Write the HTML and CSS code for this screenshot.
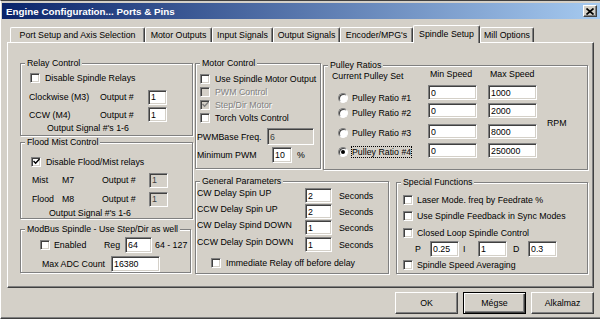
FILE: index.html
```html
<!DOCTYPE html>
<html lang="hu">
<head>
    <meta charset="UTF-8">
    <title>Engine Configuration... Ports &amp; Pins</title>
    <link rel="stylesheet" href="styles.css">
</head>
<body>
<div class="window">
    <!-- Barre de titre -->
    <div class="titlebar">
        <span class="title">Engine Configuration... Ports &amp; Pins</span>
        <span class="close-btn">
            <svg width="8" height="7" viewBox="0 0 8 7"><path d="M0.5 0.5 L7.5 6.5 M7.5 0.5 L0.5 6.5" stroke="#000" stroke-width="1.7"/></svg>
        </span>
    </div>

    <div class="client">
        <!-- Onglets -->
        <div class="tabs">
            <div class="tab tab-port">Port Setup and Axis Selection</div>
            <div class="tab tab-motor">Motor Outputs</div>
            <div class="tab tab-input">Input Signals</div>
            <div class="tab tab-output">Output Signals</div>
            <div class="tab tab-encoder">Encoder/MPG's</div>
            <div class="tab tab-spindle selected">Spindle Setup</div>
            <div class="tab tab-mill">Mill Options</div>
        </div>

        <div class="panel">
            <!-- Colonne gauche -->
            <div class="col-left">
                <div class="group relay">
                    <span class="group-title">Relay Control</span>
                    <div class="check-row"><span class="check"></span>Disable Spindle Relays</div>
                    <div class="out-row">
                        <span>Clockwise (M3)</span><span>Output #</span><input class="field" value="1">
                    </div>
                    <div class="out-row second">
                        <span>CCW (M4)</span><span>Output #</span><input class="field" value="1">
                    </div>
                    <div class="signal-note">Output Signal #'s 1-6</div>
                </div>

                <div class="group flood">
                    <span class="group-title">Flood Mist Control</span>
                    <div class="check-row">
                        <span class="check"><svg width="7" height="7" viewBox="0 0 7 7"><path d="M0.5 3 L2.6 5.2 L6.5 1" fill="none" stroke="#000" stroke-width="1.5"/></svg></span>
                        Disable Flood/Mist relays
                    </div>
                    <div class="mist-row">
                        <span>Mist</span><span>M7</span><span>Output #</span><input class="field" value="1" disabled>
                    </div>
                    <div class="mist-row second">
                        <span>Flood</span><span>M8</span><span>Output #</span><input class="field" value="1" disabled>
                    </div>
                    <div class="signal-note">Output Signal #'s 1-6</div>
                </div>

                <div class="group modbus">
                    <span class="group-title">ModBus Spindle - Use Step/Dir as well</span>
                    <div class="modbus-row">
                        <span class="check"></span>
                        <span class="enabled-label">Enabled</span>
                        <span class="reg-label">Reg</span>
                        <input class="field reg-field" value="64">
                        <span class="reg-range">64 - 127</span>
                    </div>
                    <div class="adc-row">
                        <span class="adc-label">Max ADC Count</span>
                        <input class="field adc-field" value="16380">
                    </div>
                </div>
            </div>

            <!-- Zone droite -->
            <div class="col-right">
                <div class="row-top">
                    <div class="group motor">
                        <span class="group-title">Motor Control</span>
                        <div class="check-row"><span class="check"></span>Use Spindle Motor Output</div>
                        <div class="check-row disabled"><span class="check"></span>PWM Control</div>
                        <div class="check-row disabled">
                            <span class="check"><svg width="7" height="7" viewBox="0 0 7 7"><path d="M0.5 3 L2.6 5.2 L6.5 1" fill="none" stroke="#808080" stroke-width="1.5"/></svg></span>
                            Step/Dir Motor
                        </div>
                        <div class="check-row"><span class="check"></span>Torch Volts Control</div>
                        <div class="pwm-row">
                            <span class="pwm-label">PWMBase Freq.</span>
                            <input class="field pwm-field" value="6" disabled>
                        </div>
                        <div class="minpwm-row">
                            <span class="minpwm-label">Minimum PWM</span>
                            <input class="field minpwm-field" value="10">
                            <span class="percent">%</span>
                        </div>
                    </div>

                    <div class="group pulley">
                        <span class="group-title">Pulley Ratios</span>
                        <div class="pulley-head">
                            <span class="head-set">Current Pulley Set</span>
                            <span class="head-min">Min Speed</span>
                            <span>Max Speed</span>
                        </div>
                        <div class="pulley-main">
                            <div class="radios">
                                <div class="radio-row"><span class="radio"></span>Pulley Ratio #1</div>
                                <div class="radio-row"><span class="radio"></span>Pulley Ratio #2</div>
                                <div class="radio-row"><span class="radio"></span>Pulley Ratio #3</div>
                                <div class="radio-row"><span class="radio on"></span><span class="focus">Pulley Ratio #4</span></div>
                            </div>
                            <div class="speeds min-col">
                                <input class="field speed-field" value="0">
                                <input class="field speed-field" value="0">
                                <input class="field speed-field" value="0">
                                <input class="field speed-field" value="0">
                            </div>
                            <div class="speeds max-col">
                                <input class="field speed-field" value="1000">
                                <input class="field speed-field" value="2000">
                                <input class="field speed-field" value="8000">
                                <input class="field speed-field" value="250000">
                            </div>
                            <span class="rpm">RPM</span>
                        </div>
                    </div>
                </div>

                <div class="row-bottom">
                    <div class="group general">
                        <span class="group-title">General Parameters</span>
                        <div class="delay-row"><span class="delay-label">CW Delay Spin UP</span><input class="field delay-field" value="2"><span class="seconds">Seconds</span></div>
                        <div class="delay-row"><span class="delay-label">CCW Delay Spin UP</span><input class="field delay-field" value="2"><span class="seconds">Seconds</span></div>
                        <div class="delay-row"><span class="delay-label">CW Delay Spind DOWN</span><input class="field delay-field" value="1"><span class="seconds">Seconds</span></div>
                        <div class="delay-row last"><span class="delay-label">CCW Delay Spin DOWN</span><input class="field delay-field" value="1"><span class="seconds">Seconds</span></div>
                        <div class="check-row"><span class="check"></span>Immediate Relay off before delay</div>
                    </div>

                    <div class="group special">
                        <span class="group-title">Special Functions</span>
                        <div class="check-row"><span class="check"></span>Laser Mode. freq by Feedrate %</div>
                        <div class="check-row"><span class="check"></span>Use Spindle Feedback in Sync Modes</div>
                        <div class="check-row"><span class="check"></span>Closed Loop Spindle Control</div>
                        <div class="pid-row">
                            <span class="pid-label">P</span><input class="field pid-field" value="0.25">
                            <span class="pid-label">I</span><input class="field pid-field" value="1">
                            <span class="pid-label">D</span><input class="field pid-field" value="0.3">
                        </div>
                        <div class="check-row"><span class="check"></span>Spindle Speed Averaging</div>
                    </div>
                </div>
            </div>
        </div>

        <!-- Boutons -->
        <div class="buttons">
            <button class="btn">OK</button>
            <button class="btn default">Mégse</button>
            <button class="btn">Alkalmaz</button>
        </div>
    </div>
</div>
</body>
</html>
```

FILE: styles.css
```css
/* Boîte de dialogue style Windows classique */
body {
    margin: 0;
    background-color: #d4d0c8;
    font-family: 'Liberation Sans', Arial, sans-serif;
    font-size: 8.8px;
    color: #000;
}

.window {
    width: 600px;
    height: 319px;
    box-sizing: border-box;
    border-top: 1px solid #404040;
    border-left: 1px solid #ffffff;
    border-bottom: 1px solid #404040;
    box-shadow: inset 0 -1px 0 #808080;
    padding: 2px 0 0 1px;
}

/* Barre de titre */
.titlebar {
    height: 16px;
    display: flex;
    align-items: center;
    justify-content: space-between;
    padding: 0 3px 0 4px;
    background: linear-gradient(to right, #0a246a, #a6caf0);
}

.title {
    color: #fff;
    font-weight: bold;
    font-size: 9.8px;
}

.close-btn {
    width: 14px;
    height: 12px;
    box-sizing: border-box;
    display: flex;
    align-items: center;
    justify-content: center;
    background-color: #d4d0c8;
    border: 1px solid;
    border-color: #fff #404040 #404040 #fff;
    box-shadow: inset -1px -1px 0 #808080;
}

.client {
    padding-left: 5px;
}

/* Onglets */
.tabs {
    height: 23px;
    display: flex;
    align-items: flex-end;
    padding-left: 3px;
}

.tab {
    height: 15px;
    box-sizing: border-box;
    flex: none;
    display: flex;
    align-items: center;
    justify-content: center;
    white-space: nowrap;
    background-color: #d4d0c8;
    border-top: 1px solid #fff;
    border-left: 1px solid #fff;
    border-right: 1px solid #404040;
    border-radius: 2px 2px 0 0;
    box-shadow: inset -1px 0 0 #808080;
}

.tab-port { width: 135px; }
.tab-motor { width: 67px; }
.tab-input { width: 61px; }
.tab-output { width: 67px; }
.tab-encoder { width: 73px; }
.tab-spindle { width: 67px; }
.tab-mill { width: 54px; }

.tab.selected {
    height: 18px;
    margin-bottom: -1px;
    padding-bottom: 1px;
    position: relative;
    z-index: 1;
}

/* Panneau principal */
.panel {
    width: 587px;
    height: 246px;
    box-sizing: border-box;
    display: flex;
    gap: 2px;
    padding: 20px 0 0 12px;
    border: 1px solid;
    border-color: #fff #404040 #404040 #fff;
    box-shadow: inset -1px -1px 0 #808080;
}

.col-left,
.col-right {
    display: flex;
    flex-direction: column;
}

.row-top {
    display: flex;
    gap: 2px;
    align-items: flex-start;
}

.row-bottom {
    display: flex;
    align-items: flex-start;
    margin-top: 11px;
}

/* Cadres de groupe */
.group {
    position: relative;
    box-sizing: border-box;
    border: 1px solid #808080;
    box-shadow: inset 1px 1px 0 #fff, 1px 1px 0 #fff;
}

.group-title {
    position: absolute;
    top: -6px;
    left: 4px;
    padding: 0 2px;
    line-height: 11px;
    white-space: nowrap;
    background-color: #d4d0c8;
}

/* Contrôles */
.field {
    box-sizing: border-box;
    height: 15px;
    margin: 0;
    padding: 0 0 0 2px;
    border: 1px solid;
    border-color: #808080 #fff #fff #808080;
    box-shadow: inset 1px 1px 0 #404040, inset -1px -1px 0 #d4d0c8;
    background-color: #fff;
    font: inherit;
    color: #000;
    outline: none;
}

.field:disabled {
    background-color: #d4d0c8;
    color: #404040;
}

.check {
    width: 10px;
    height: 10px;
    flex: none;
    box-sizing: border-box;
    display: flex;
    align-items: center;
    justify-content: center;
    background-color: #fff;
    border: 1px solid;
    border-color: #808080 #fff #fff #808080;
    box-shadow: inset 1px 1px 0 #404040, inset -1px -1px 0 #d4d0c8;
}

.check svg {
    flex: none;
}

.check-row {
    height: 13px;
    display: flex;
    align-items: center;
    gap: 5px;
    white-space: nowrap;
}

.disabled {
    color: #808080;
    text-shadow: 1px 1px 0 #fff;
}

.disabled .check {
    background-color: #d4d0c8;
}

.radio {
    width: 10px;
    height: 10px;
    flex: none;
    box-sizing: border-box;
    display: flex;
    align-items: center;
    justify-content: center;
    border-radius: 50%;
    background-color: #fff;
    border: 1px solid;
    border-color: #808080 #fff #fff #808080;
    box-shadow: inset 1px 1px 0 #404040;
}

.radio.on::after {
    content: '';
    width: 4px;
    height: 4px;
    border-radius: 50%;
    background-color: #000;
}

.focus {
    outline: 1px dotted #000;
}

/* Relay Control */
.relay {
    width: 173px;
    height: 73px;
    padding: 7px 0 0 8px;
}

.relay .check-row {
    margin-left: 1px;
}

.out-row {
    height: 16px;
    margin-top: 5px;
    display: grid;
    grid-template-columns: 71px 48px 19px;
    align-items: center;
}

.out-row.second {
    height: 15px;
    margin-top: 2px;
}

.out-row .field,
.mist-row .field {
    width: 19px;
}

.signal-note {
    padding-left: 18px;
    line-height: 12px;
}

/* Flood Mist Control */
.flood {
    width: 173px;
    height: 77px;
    margin-top: 6px;
    padding: 12px 0 0 10px;
}

.mist-row {
    height: 16px;
    margin-top: 4px;
    padding-left: 1px;
    display: grid;
    grid-template-columns: 30px 40px 47px 19px;
    align-items: center;
}

.mist-row.second {
    margin-top: 3px;
}

/* ModBus Spindle */
.modbus {
    width: 171px;
    height: 44px;
    margin-top: 10px;
    padding: 7px 0 0 19px;
}

.modbus-row,
.adc-row {
    height: 16px;
    display: flex;
    align-items: center;
    white-space: nowrap;
}

.enabled-label {
    width: 50px;
    margin-left: 4px;
}

.reg-label {
    width: 21px;
}

.reg-field {
    width: 27px;
    height: 16px;
}

.reg-range {
    margin-left: 3px;
}

.adc-row {
    margin: 3px 0 0 2px;
}

.adc-label {
    width: 69px;
}

.adc-field {
    width: 49px;
    height: 16px;
}

/* Motor Control */
.motor {
    width: 126px;
    height: 106px;
    padding: 8px 0 0 1px;
}

.motor .check-row {
    margin-left: 3px;
}

.pwm-row,
.minpwm-row {
    display: flex;
    align-items: center;
    white-space: nowrap;
}

.pwm-row {
    height: 17px;
    margin-top: 4px;
}

.pwm-label {
    width: 70px;
}

.pwm-field {
    width: 47px;
    height: 17px;
}

.minpwm-row {
    height: 16px;
    margin-top: 2px;
}

.minpwm-label {
    width: 75px;
}

.minpwm-field {
    width: 20px;
    height: 16px;
}

.percent {
    margin-left: 5px;
}

/* Pulley Ratios */
.pulley {
    width: 265px;
    height: 105px;
    margin-top: 2px;
    padding: 3px 0 0 8px;
}

.pulley-head {
    height: 11px;
    display: flex;
    align-items: flex-start;
    line-height: 11px;
    white-space: nowrap;
}

.head-set {
    width: 98px;
    margin-top: 2px;
}

.head-min {
    width: 60px;
}

.pulley-main {
    display: flex;
    align-items: flex-start;
}

.radios {
    width: 90px;
    margin-left: 6px;
}

.radio-row {
    height: 13px;
    display: flex;
    align-items: center;
    gap: 4px;
    white-space: nowrap;
}

.radio-row:nth-child(1) { margin-top: 11px; }
.radio-row:nth-child(2) { margin-top: 2px; }
.radio-row:nth-child(3) { margin-top: 7px; }
.radio-row:nth-child(4) { margin-top: 6px; }

.speeds {
    display: flex;
    flex-direction: column;
}

.min-col {
    width: 60px;
}

.max-col {
    width: 59px;
}

.speed-field {
    width: 49px;
}

.speed-field:nth-child(1) { margin-top: 5px; }
.speed-field:nth-child(2) { margin-top: 3px; }
.speed-field:nth-child(3) { margin-top: 6px; }
.speed-field:nth-child(4) { margin-top: 4px; }

.rpm {
    margin-top: 38px;
    line-height: 11px;
}

/* General Parameters */
.general {
    width: 194px;
    height: 93px;
    padding: 6px 0 0 1px;
}

.delay-row {
    height: 16px;
    display: flex;
    align-items: flex-start;
    white-space: nowrap;
}

.delay-row.last {
    margin-top: 1px;
}

.delay-label {
    width: 108px;
    line-height: 11px;
}

.delay-field {
    width: 27px;
}

.seconds {
    margin: 3px 0 0 7px;
    line-height: 11px;
}

.general .check-row {
    height: 12px;
    margin: 4px 0 0 14px;
}

/* Special Functions */
.special {
    width: 192px;
    height: 92px;
    margin: 1px 0 0 7px;
    padding: 10px 0 0 6px;
}

.special .check-row {
    gap: 4px;
}

.special .check-row:nth-of-type(2) { margin-top: 3px; }
.special .check-row:nth-of-type(3) { margin-top: 4px; }
.special .check-row:nth-of-type(5) { margin-top: 1px; }

.pid-row {
    height: 16px;
    margin-top: 2px;
    padding-left: 12px;
    display: flex;
    align-items: center;
}

.pid-label {
    width: 15px;
}

.pid-label + .field + .pid-label {
    margin-left: 4px;
}

.pid-label + .field + .pid-label + .field + .pid-label {
    margin-left: 6px;
}

.pid-field {
    width: 29px;
    height: 16px;
}

/* Boutons du bas */
.buttons {
    width: 587px;
    margin-top: 4px;
    display: flex;
    justify-content: flex-end;
    gap: 5px;
}

.btn {
    width: 63px;
    height: 22px;
    box-sizing: border-box;
    margin: 0;
    padding: 0;
    display: flex;
    align-items: center;
    justify-content: center;
    background-color: #d4d0c8;
    font: inherit;
    color: #000;
    border: 1px solid;
    border-color: #fff #404040 #404040 #fff;
    box-shadow: inset -1px -1px 0 #808080;
}

.btn.default {
    border-color: #000;
    box-shadow: inset 1px 1px 0 #fff, inset -1px -1px 0 #404040, inset -2px -2px 0 #808080;
}
```
